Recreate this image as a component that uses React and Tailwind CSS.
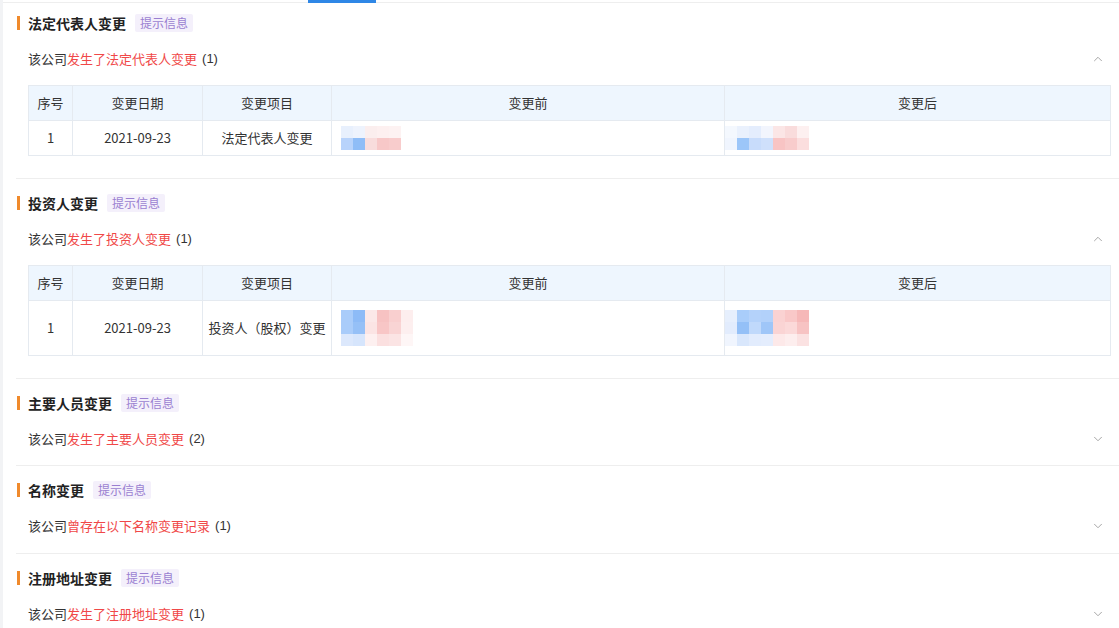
import React from "react";
import { ChevronUp, ChevronDown } from "lucide-react";

const font = { fontFamily: '"Microsoft YaHei", "Noto Sans CJK SC", "Liberation Sans", sans-serif' };

const Mosaic = ({ cells }) => (
  <div className="flex flex-col">
    {cells.map((row, i) => (
      <div key={i} className="flex">
        {row.map((c, j) => (
          <div key={j} className="w-[12px] h-[12px]" style={{ background: c }} />
        ))}
      </div>
    ))}
  </div>
);

const Tag = () => (
  <span className="ml-[9px] h-[18px] px-[5px] flex items-center bg-[#f4f0fb] text-[#9a7fd1] text-[12px] rounded-[2px]">
    提示信息
  </span>
);

const Title = ({ text }) => (
  <div className="h-[32px] flex items-center">
    <span className="w-[3px] h-[14px] bg-[#f08a2c] ml-[1px]" />
    <span className="ml-[8px] text-[14px] font-bold text-[#222]">{text}</span>
    <Tag />
  </div>
);

const Sub = ({ red, count, open }) => (
  <div className="h-[40px] flex items-center pl-[12px] pr-[14px] text-[13px] text-[#333]">
    <span>该公司</span>
    <span className="text-[#f04848]">{red}</span>
    <span className="ml-[5px]" style={{ fontFamily: '"Liberation Sans", sans-serif' }}>({count})</span>
    <span className="ml-auto text-[#999]">
      {open ? <ChevronUp size={14} strokeWidth={1.5} /> : <ChevronDown size={14} strokeWidth={1.5} />}
    </span>
  </div>
);

const Table = ({ item, rowH, before, after }) => (
  <div className="ml-[12px] mr-[8px] mt-[6px] border border-[#e5eaf0] text-[13px] text-[#333]">
    <div className="flex h-[35px] bg-[#eef6fe] border-b border-[#e5eaf0]">
      <div className="w-[44px] flex items-center justify-center border-r border-[#e5eaf0]">序号</div>
      <div className="w-[130px] flex items-center justify-center border-r border-[#e5eaf0]">变更日期</div>
      <div className="w-[129px] flex items-center justify-center border-r border-[#e5eaf0]">变更项目</div>
      <div className="w-[393px] flex items-center justify-center border-r border-[#e5eaf0]">变更前</div>
      <div className="flex-1 flex items-center justify-center">变更后</div>
    </div>
    <div className="flex" style={{ height: rowH }}>
      <div className="w-[44px] flex items-center justify-center border-r border-[#e5eaf0]">1</div>
      <div className="w-[130px] flex items-center justify-center border-r border-[#e5eaf0]">2021-09-23</div>
      <div className="w-[129px] flex items-center justify-center border-r border-[#e5eaf0]">{item}</div>
      <div className="w-[393px] flex items-center pl-[9px] border-r border-[#e5eaf0]">{before}</div>
      <div className="flex-1 flex items-center">{after}</div>
    </div>
  </div>
);

const b1 = [
  ["#e8f0fd", "#eef3fd", "#fbeeee", "#fdf0f0", "#fdf2f2"],
  ["#b8d3fb", "#8fbdf7", "#f8dcdc", "#f7c8c8", "#f8cccc"],
];
const a1 = [
  ["#f4f8fe", "#eaf1fd", "#e4edfd", "#f2f5fd", "#fbe6e6", "#f9dcdc", "#fdf0f0"],
  ["#f0f5fe", "#9cc6f9", "#c8dcfb", "#cfe0fb", "#f8c4c4", "#f8cccc", "#fbdede"],
];
const b2 = [
  ["#a9ccfa", "#8dbbf7", "#fbe8e8", "#f7c2c2", "#f9cfcf", "#fdeeee"],
  ["#a9ccfa", "#95c0f7", "#fbe4e4", "#f8c6c6", "#f9d4d4", "#fdefef"],
  ["#dce8fc", "#d6e5fc", "#fdf0f0", "#fbe0e0", "#fbe4e4", "#fef6f6"],
];
const a2 = [
  ["#e6effd", "#a9cdfa", "#b4d2fa", "#b2d1fa", "#fad2d2", "#f9c8c8", "#f6b8b8"],
  ["#e2ecfd", "#94c0f7", "#c0d9fb", "#9fc6f8", "#fad4d4", "#fbd9d9", "#f7c3c3"],
  ["#f0f5fe", "#d9e7fc", "#e2ecfd", "#e4edfd", "#fde9e9", "#fdeeee", "#fbe2e2"],
];

export default function App() {
  return (
    <div className="w-[1119px] h-[628px] overflow-hidden bg-white border-l-[3px] border-[#f2f3f5]" style={font}>
      <div className="h-[3px] border-b border-[#eeeeee] relative">
        <div className="absolute left-[305px] top-0 w-[68px] h-[3px] bg-[#2f87e6]" />
      </div>
      <div className="pl-[13px]">
        <div className="pt-[4px] pb-[22px] border-b border-[#eeeeee]">
          <Title text="法定代表人变更" />
          <Sub red="发生了法定代表人变更" count="1" open />
          <Table item="法定代表人变更" rowH={34} before={<Mosaic cells={b1} />} after={<Mosaic cells={a1} />} />
        </div>
        <div className="pt-[8px] pb-[22px] border-b border-[#eeeeee]">
          <Title text="投资人变更" />
          <Sub red="发生了投资人变更" count="1" open />
          <Table item="投资人（股权）变更" rowH={54} before={<Mosaic cells={b2} />} after={<Mosaic cells={a2} />} />
        </div>
        <div className="pt-[8px] pb-[6px] border-b border-[#eeeeee]">
          <Title text="主要人员变更" />
          <Sub red="发生了主要人员变更" count="2" />
        </div>
        <div className="pt-[8px] pb-[7px] border-b border-[#eeeeee]">
          <Title text="名称变更" />
          <Sub red="曾存在以下名称变更记录" count="1" />
        </div>
        <div className="pt-[8px] pb-[6px]">
          <Title text="注册地址变更" />
          <Sub red="发生了注册地址变更" count="1" />
        </div>
      </div>
    </div>
  );
}
